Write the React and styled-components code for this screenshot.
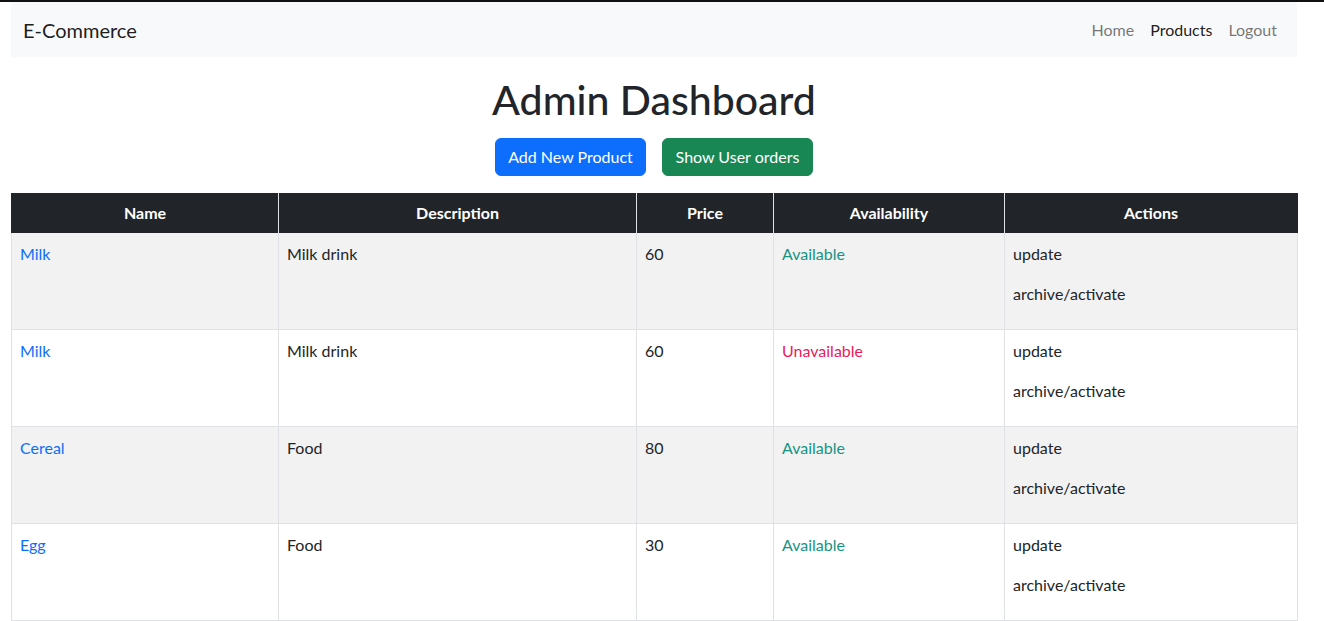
import styled, { createGlobalStyle } from 'styled-components';

const GlobalStyle = createGlobalStyle`
  * { box-sizing: border-box; }
  html { border-top: 2px solid #111; }
  body {
    margin: 0;
    font-family: Lato, "Noto Sans", sans-serif;
    font-size: 16px;
    line-height: 1.5;
    color: #212529;
    background: #fff;
  }
`;

const products = [
  { name: 'Milk', description: 'Milk drink', price: 60, available: true },
  { name: 'Milk', description: 'Milk drink', price: 60, available: false },
  { name: 'Cereal', description: 'Food', price: 80, available: true },
  { name: 'Egg', description: 'Food', price: 30, available: true },
];

const columns = [
  { label: 'Name', width: 267 },
  { label: 'Description', width: 358 },
  { label: 'Price', width: 137 },
  { label: 'Availability', width: 231 },
  { label: 'Actions', width: 293 },
];

const App = () => {
  return (
    <>
      <GlobalStyle />
      <Page>
        <NavBar>
          <Brand href='#'>E-Commerce</Brand>
          <NavLinks>
            <NavLink href='#'>Home</NavLink>
            <NavLink href='#' $active>Products</NavLink>
            <NavLink href='#'>Logout</NavLink>
          </NavLinks>
        </NavBar>

        <Title>Admin Dashboard</Title>
        <ButtonRow>
          <Button $color='#0d6efd'>Add New Product</Button>
          <Button $color='#198754'>Show User orders</Button>
        </ButtonRow>

        <Table>
          <colgroup>
            {columns.map((c) => (
              <col key={c.label} style={{ width: c.width }} />
            ))}
          </colgroup>
          <thead>
            <tr>
              {columns.map((c) => (
                <HeadCell key={c.label}>{c.label}</HeadCell>
              ))}
            </tr>
          </thead>
          <tbody>
            {products.map((p, i) => (
              <Row key={i} $striped={i % 2 === 0}>
                <Cell>
                  <ProductLink href='#'>{p.name}</ProductLink>
                </Cell>
                <Cell>{p.description}</Cell>
                <Cell>{p.price}</Cell>
                <Cell>
                  <Status $available={p.available}>
                    {p.available ? 'Available' : 'Unavailable'}
                  </Status>
                </Cell>
                <Cell>
                  <Action>update</Action>
                  <Action>archive/activate</Action>
                </Cell>
              </Row>
            ))}
          </tbody>
        </Table>
      </Page>
    </>
  );
};

//style
const Page = styled.div`
  padding: 0 27px 0 11px;
`;

const NavBar = styled.nav`
  display: flex;
  align-items: center;
  justify-content: space-between;
  background: #f8f9fa;
  padding: 8px 12px;
  height: 55px;
`;

const Brand = styled.a`
  font-size: 20px;
  color: rgba(0, 0, 0, 0.9);
  text-decoration: none;
  line-height: 30px;
`;

const NavLinks = styled.div`
  display: flex;
`;

const NavLink = styled.a`
  padding: 8px;
  color: ${(p) => (p.$active ? 'rgba(0,0,0,0.9)' : 'rgba(0,0,0,0.55)')};
  text-decoration: none;
`;

const Title = styled.h1`
  margin: 19px 0 14px;
  text-align: center;
  font-size: 41px;
  font-weight: 500;
  line-height: 48px;
`;

const ButtonRow = styled.div`
  display: flex;
  justify-content: center;
  gap: 16px;
  margin-bottom: 17px;
`;

const Button = styled.button`
  font-family: inherit;
  font-size: 16px;
  line-height: 24px;
  color: #fff;
  background: ${(p) => p.$color};
  border: 1px solid ${(p) => p.$color};
  border-radius: 6px;
  padding: 6px 12px;
  width: 151px;
  cursor: pointer;
`;

const Table = styled.table`
  width: 100%;
  border-collapse: collapse;
  table-layout: fixed;
`;

const HeadCell = styled.th`
  background: #212529;
  color: #fff;
  font-weight: 700;
  text-align: center;
  padding: 8px;
  height: 40px;
  border: 1px solid #dee2e6;
  border-top: none;
  border-bottom: none;
  &:first-child { border-left-color: #212529; }
  &:last-child { border-right-color: #212529; }
`;

const Row = styled.tr`
  background: ${(p) => (p.$striped ? '#f2f2f2' : '#fff')};
`;

const Cell = styled.td`
  vertical-align: top;
  padding: 9px 8px 7px;
  border: 1px solid #dee2e6;
  border-top: none;
`;

const ProductLink = styled.a`
  color: #0d6efd;
  text-decoration: none;
`;

const Status = styled.span`
  color: ${(p) => (p.$available ? '#169483' : '#ea1a5a')};
`;

const Action = styled.p`
  margin: 0 0 16px;
`;

export default App;
